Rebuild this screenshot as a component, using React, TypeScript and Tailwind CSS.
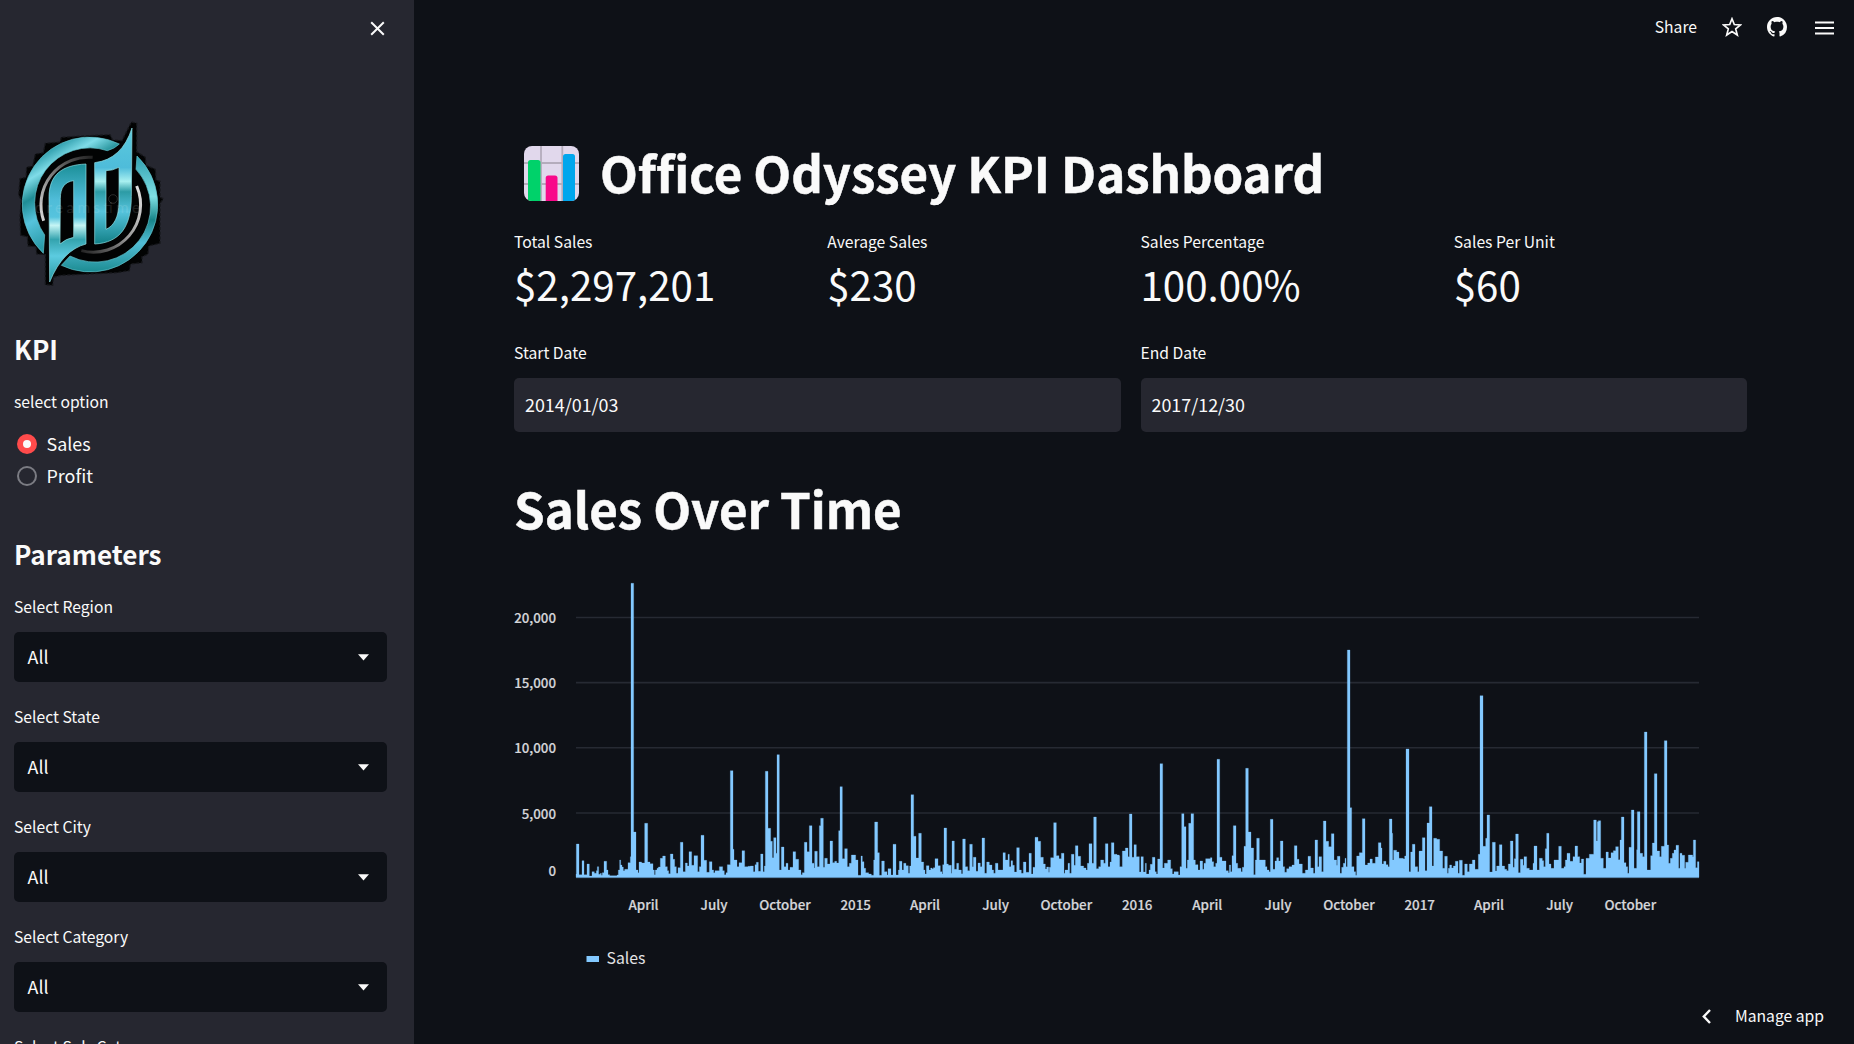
import { BsGithub } from "react-icons/bs";

type Segment = { offset: number; base: number; steps: number[][] };

// Sales profile, one [start, top] pair per step, in thirds of a pixel.
const SEGMENTS: Segment[] = [
  {
    offset: -228,
    base: 952,
    steps: [
      [228, 942], [229, 852], [237, 944], [246, 902], [252, 944], [261, 912], [268, 948], [276, 935], [283, 940], [289, 932],
      [292, 920], [296, 943], [301, 940], [304, 946], [307, 938], [312, 904], [320, 930], [324, 944], [329, 947], [351, 945],
      [355, 930], [359, 900], [362, 915], [366, 921], [370, 932], [374, 928], [384, 908], [391, 890], [393, 70], [401, 816],
      [408, 930], [414, 938], [417, 906], [425, 909], [434, 790], [443, 906], [450, 911], [459, 930], [463, 944], [466, 930],
      [471, 925], [475, 921], [481, 895], [488, 888], [496, 920], [502, 932], [506, 941], [511, 882], [519, 898], [524, 920],
      [529, 940], [534, 923], [541, 847], [549, 935], [556, 909], [562, 918], [567, 875], [575, 916], [582, 887], [593, 935],
      [598, 920], [603, 826], [612, 901], [620, 937], [628, 905], [636, 930], [641, 938], [645, 932], [658, 920], [668, 932],
      [673, 944], [678, 938], [682, 914], [691, 632], [699, 868], [702, 900], [711, 920], [717, 908], [726, 872], [734, 920],
      [744, 919], [751, 918], [760, 935], [765, 914], [769, 907], [775, 934], [782, 882], [789, 935], [793, 918], [796, 634],
      [804, 805], [812, 844], [817, 893], [821, 833], [828, 880], [831, 584], [838, 930], [844, 861], [852, 920], [858, 910],
      [864, 930], [870, 922], [879, 875], [887, 898], [896, 930], [903, 944], [907, 938], [913, 847], [921, 875], [928, 797],
      [936, 910], [942, 924], [944, 874], [952, 920], [958, 797], [962, 775], [970, 922], [974, 895], [982, 912], [990, 843],
      [998, 908], [1004, 904], [1010, 909], [1016, 812], [1020, 680], [1027, 896], [1034, 866], [1042, 920], [1048, 910],
      [1054, 885], [1067, 900], [1074, 946], [1083, 888], [1087, 905], [1092, 925], [1097, 938], [1106, 942], [1114, 946],
      [1121, 900], [1124, 786], [1133, 878], [1138, 946], [1145, 903], [1153, 935], [1161, 945], [1164, 926], [1173, 945],
      [1179, 853], [1188, 945], [1195, 930],
    ],
  },
  {
    offset: 672,
    base: 472,
    steps: [
      [298, 424], [306, 450], [311, 430], [318, 437], [325, 460], [329, 438], [333, 224], [341, 349], [348, 414], [356, 340],
      [364, 426], [371, 450], [375, 462], [379, 437], [387, 450], [392, 444], [396, 446], [400, 443], [405, 416], [414, 437],
      [421, 455], [426, 462], [428, 434], [432, 324], [440, 432], [445, 436], [454, 460], [456, 363], [463, 448], [470, 430],
      [476, 450], [484, 461], [488, 357], [496, 440], [503, 452], [509, 373], [517, 440], [520, 412], [528, 454], [534, 429],
      [541, 440], [546, 354], [554, 460], [560, 426], [568, 435], [576, 450], [581, 460], [586, 430], [594, 450], [602, 450],
      [609, 398], [616, 420], [624, 403], [628, 440], [633, 422], [638, 436], [643, 456], [650, 383], [658, 450], [664, 460],
      [670, 426], [678, 457], [687, 400], [694, 462], [699, 442], [705, 352], [714, 364], [722, 412], [730, 432], [736, 447],
      [740, 441], [746, 457], [748, 442], [752, 413], [761, 308], [769, 407], [777, 416], [784, 400], [792, 460], [795, 450],
      [804, 430], [809, 460], [814, 403], [822, 436], [826, 377], [834, 409], [842, 438], [851, 444], [858, 450], [862, 430],
      [867, 371], [876, 430], [881, 291], [889, 446], [896, 440], [902, 420], [911, 430], [916, 371], [924, 440], [930, 426],
      [934, 368], [942, 403], [951, 405], [958, 408],
    ],
  },
  {
    offset: 1572,
    base: 472,
    steps: [
      [59, 440], [67, 393], [76, 384], [84, 410], [88, 282], [96, 412], [102, 374], [109, 410], [118, 456], [123, 410],
      [130, 456], [136, 430], [139, 462], [147, 450], [151, 433], [157, 412], [165, 455], [169, 462], [173, 417], [180, 131],
      [188, 444], [193, 430], [203, 420], [212, 446], [217, 462], [222, 455], [235, 465], [240, 440], [245, 281], [252, 320],
      [258, 445], [262, 420], [266, 310], [273, 281], [281, 420], [286, 434], [294, 450], [300, 423], [308, 448], [312, 430],
      [317, 416], [331, 413], [336, 425], [341, 440], [347, 430], [351, 118], [359, 412], [366, 423], [378, 452], [385, 458],
      [388, 435], [392, 455], [396, 407], [400, 317], [408, 430], [413, 445], [423, 455], [427, 442], [432, 379], [437, 145],
      [445, 336], [453, 384], [461, 464], [466, 420], [470, 355], [478, 420], [496, 440], [501, 450], [507, 455], [511, 298],
      [519, 448], [525, 423], [530, 413], [536, 423], [541, 363], [549, 440], [554, 457], [560, 446], [567, 440], [576, 435],
      [583, 377], [591, 418], [597, 432], [607, 460], [616, 450], [624, 409], [632, 444], [640, 460], [645, 360], [653, 440],
      [657, 410], [665, 455], [670, 303], [678, 364], [686, 380], [694, 341], [702, 420], [710, 436], [712, 409], [720, 460],
      [725, 442], [730, 430], [735, 415], [738, 440], [742, -210], [750, 263], [755, 440], [762, 455], [767, 466], [770, 408],
      [778, 398], [787, 296], [795, 435], [803, 429], [810, 417], [817, 430], [826, 411], [835, 368], [843, 384], [846, 432],
      [851, 424], [858, 434], [864, 440], [868, 297], [876, 340], [878, 420], [881, 391], [890, 396], [897, 415], [910, 417],
      [914, 408], [918, 87], [927, 455], [932, 396], [937, 373], [945, 440], [953, 455], [957, 394],
    ],
  },
  {
    offset: 2472,
    base: 712,
    steps: [
      [58, 633], [67, 593], [75, 692], [81, 549], [88, 500], [96, 678], [101, 595], [110, 598], [119, 633], [128, 685],
      [134, 649], [142, 700], [145, 685], [149, 675], [155, 684], [160, 678], [166, 664], [174, 700], [178, 661], [187, 706],
      [194, 672], [202, 695], [208, 672], [217, 660], [225, 688], [235, 643], [240, 167], [249, 619], [257, 595], [261, 525],
      [269, 696], [277, 607], [286, 693], [290, 678], [298, 614], [306, 678], [314, 688], [320, 692], [325, 672], [331, 603],
      [339, 682], [343, 656], [347, 582], [355, 698], [361, 658], [369, 676], [372, 650], [380, 685], [388, 690], [399, 670],
      [402, 618], [411, 690], [418, 655], [427, 662], [431, 680], [436, 626], [440, 580], [447, 672], [453, 685], [462, 660],
      [476, 619], [484, 685], [492, 680], [496, 660], [501, 640], [510, 664], [519, 650], [525, 618], [533, 650], [539, 669],
      [544, 657], [551, 703], [558, 655], [568, 643], [581, 540], [589, 603], [592, 545], [595, 542], [602, 655], [610, 685],
      [618, 636], [625, 654], [633, 638], [640, 632], [647, 620], [655, 659], [660, 600], [664, 531], [672, 668], [678, 680],
      [683, 700], [687, 622], [694, 510], [702, 685], [710, 629], [712, 515], [720, 640], [728, 650], [733, 276], [741, 690],
      [752, 647], [757, 609], [763, 401], [771, 633], [779, 650], [784, 619], [793, 302], [801, 615], [806, 670], [811, 655],
      [817, 640], [822, 630], [828, 616], [836, 685], [840, 640], [846, 646], [854, 685], [857, 667], [865, 645], [878, 650],
      [880, 600], [887, 683], [892, 665], [897, 665],
    ],
  },
];

const PLOT_LEFT = 62;
const BASELINE = 302.3;

const areaPath = (() => {
  const points: [number, number][] = [];
  SEGMENTS.forEach((s) =>
    s.steps.forEach(([x, y]) => points.push([PLOT_LEFT + (x + s.offset) / 3, BASELINE - (s.base - y) / 3])),
  );
  let d = `M${PLOT_LEFT} ${BASELINE}`;
  points.forEach(([x, y]) => {
    d += `H${x.toFixed(2)}V${y.toFixed(2)}`;
  });
  return `${d}H1185V${BASELINE}Z`;
})();

const Y_TICKS: [string, number, number][] = [
  ["20,000", 42.5, 48.3],
  ["15,000", 107.6, 113.3],
  ["10,000", 172.7, 178.4],
  ["5,000", 238, 243.8],
  ["0", 0, 301],
];

const X_TICKS: [string, number][] = [
  ["April", 129.5], ["July", 200], ["October", 271], ["2015", 341.7], ["April", 411], ["July", 481.7],
  ["October", 552.3], ["2016", 623.2], ["April", 693.3], ["July", 764], ["October", 835], ["2017", 905.7],
  ["April", 975], ["July", 1045.7], ["October", 1116.3],
];

function SalesChart() {
  return (
    <svg width="1233" height="410" viewBox="0 0 1233 410" className="block">
      {Y_TICKS.map(([label, line, text]) => (
        <g key={label}>
          {line > 0 && <line x1={PLOT_LEFT} x2="1185" y1={line} y2={line} stroke="#262a33" strokeWidth="1.6" />}
          <text x="42" y={text} textAnchor="end" fill="#d5d6da" stroke="#d5d6da" strokeWidth="0.2" fontSize="13.3" fontWeight="500">
            {label}
          </text>
        </g>
      ))}
      <path d={areaPath} fill="#83c9ff" stroke="#83c9ff" strokeOpacity="0.5" strokeWidth="0.5" />
      <line x1={PLOT_LEFT} x2="1185" y1="302.6" y2="302.6" stroke="#5f93bd" strokeWidth="1" />
      {X_TICKS.map(([label, x]) => (
        <text key={x} x={x} y="335" textAnchor="middle" fill="#d5d6da" stroke="#d5d6da" strokeWidth="0.2" fontSize="13.4" fontWeight="500">
          {label}
        </text>
      ))}
      <rect x="72.500" y="381" width="12.500" height="6" fill="#83c9ff" />
      <text x="92.500" y="389" fill="#e3e4e6" fontSize="15.800">
        Sales
      </text>
    </svg>
  );
}

function Logo() {
  return (
    <svg width="200" height="200" viewBox="0 0 600 600" className="block">
      <defs>
        <linearGradient id="ring" x1="0.1" y1="0" x2="0.6" y2="1">
          <stop offset="0" stopColor="#3fb0c2" />
          <stop offset="0.15" stopColor="#2a9aa9" />
          <stop offset="0.28" stopColor="#7fdce8" />
          <stop offset="0.42" stopColor="#1f8d95" />
          <stop offset="0.58" stopColor="#56c3dc" />
          <stop offset="0.8" stopColor="#2a9ba8" />
          <stop offset="1" stopColor="#3cb0bd" />
        </linearGradient>
        <linearGradient id="ringRight" x1="0" y1="0" x2="0" y2="1">
          <stop offset="0" stopColor="#2f9fb0" />
          <stop offset="0.35" stopColor="#7fe0e4" />
          <stop offset="0.55" stopColor="#178489" />
          <stop offset="0.75" stopColor="#52bdd6" />
          <stop offset="1" stopColor="#1c8c92" />
        </linearGradient>
        <linearGradient id="leftLetter" x1="0" y1="0" x2="0" y2="1">
          <stop offset="0" stopColor="#1b8f98" />
          <stop offset="0.3" stopColor="#4fbcd8" />
          <stop offset="0.45" stopColor="#56c4de" />
          <stop offset="0.52" stopColor="#c5f5f5" />
          <stop offset="0.64" stopColor="#34a3ae" />
          <stop offset="0.78" stopColor="#5ccbe0" />
          <stop offset="1" stopColor="#25969f" />
        </linearGradient>
        <linearGradient id="rightLetter" x1="0" y1="0" x2="0" y2="1">
          <stop offset="0" stopColor="#5ccadd" />
          <stop offset="0.34" stopColor="#4ebcda" />
          <stop offset="0.46" stopColor="#a9f0f0" />
          <stop offset="0.55" stopColor="#2c9ba5" />
          <stop offset="0.72" stopColor="#56c4dd" />
          <stop offset="1" stopColor="#128087" />
        </linearGradient>
        <linearGradient id="silverLeft" x1="0" y1="1" x2="1" y2="0">
          <stop offset="0" stopColor="#d8d8d8" />
          <stop offset="0.5" stopColor="#777" />
          <stop offset="1" stopColor="#222" />
        </linearGradient>
        <linearGradient id="silverRight" x1="1" y1="0" x2="0" y2="1">
          <stop offset="0" stopColor="#e4e4e4" />
          <stop offset="0.5" stopColor="#999" />
          <stop offset="1" stopColor="#222" />
        </linearGradient>
      </defs>
      <path
        d="M395 66L410 70L410 155L436 172L438 196L466 208L468 240L480 244L480 292L490 296L480 310L480 430L446 438L444 462L426 470L426 488L392 492L388 512L350 518L182 526L160 532L158 556L136 554L136 464L110 462L108 440L84 438L82 410L62 406L60 350L64 300L56 285L60 236L78 232L80 202L98 198L106 162L130 158L136 130L180 126L184 112L252 108L330 104L338 120L366 122L388 78Z"
        fill="#020303"
        stroke="#17181c"
        strokeWidth="4"
        strokeDasharray="9 5"
      />
      <path
        d="M358 132A202 202 0 0 0 130 460L134 405A166 166 0 0 1 322 152Q344 146 358 132Z"
        fill="url(#ring)"
        stroke="#62c3cc"
        strokeWidth="2"
      />
      <path
        d="M411 168A202 202 0 0 1 184 496L210 468A166 166 0 0 0 408 208Z"
        fill="url(#ringRight)"
        stroke="#62c3cc"
        strokeWidth="2"
      />
      <path d="M131 362A143 143 0 0 1 278 172" fill="none" stroke="url(#silverLeft)" strokeWidth="9" />
      <path d="M410 258A142 142 0 0 1 244 452" fill="none" stroke="url(#silverRight)" strokeWidth="9" />
      <path
        fillRule="evenodd"
        d="M258 192L258 432Q188 450 149 546L147 290C148 225 185 195 258 192ZM221 242C195 245 181 262 181 296L180 432Q198 416 221 412Z"
        fill="url(#leftLetter)"
        stroke="#8fdfe4"
        strokeWidth="2"
      />
      <path
        fillRule="evenodd"
        d="M396 84L394 290C394 380 360 428 284 432L284 188Q366 178 396 84ZM318 212L318 388C342 378 357 350 357 306L357 202Q338 212 318 212Z"
        fill="url(#rightLetter)"
        stroke="#8fdfe4"
        strokeWidth="2"
      />
      <text x="104" y="340" fontSize="46" fill="#ffffff" opacity="0.1" textLength="316" fontFamily="Lato, sans-serif">
        dreamstime
      </text>
      <circle cx="339" cy="297" r="13" fill="none" stroke="#ffffff" strokeOpacity="0.15" strokeWidth="3" />
    </svg>
  );
}

function BarChartEmoji() {
  return (
    <svg width="55" height="55" viewBox="0 0 55 55" className="mt-[7px] ml-[10px] block shrink-0">
      <rect width="55" height="55" rx="8" fill="#e1d8ec" />
      <path d="M17 0V55M38.3 0V55M0 17H55M0 38H55" stroke="#b4acbc" strokeWidth="1.8" />
      <path d="M4 55V16.500a2.500 2.500 0 0 1 2.500-2.500H14a2.500 2.500 0 0 1 2.500 2.500V55H8Q6 55 4 54Z" fill="#00d26a" />
      <path d="M21.700 55V32a2.500 2.500 0 0 1 2.500-2.500H31a2.500 2.500 0 0 1 2.500 2.500V55Z" fill="#f8098a" />
      <path d="M39 55V10.500A2.500 2.500 0 0 1 41.500 8H48.500a2.500 2.500 0 0 1 2.500 2.500V54Q49 55 47 55Z" fill="#00a6ed" />
    </svg>
  );
}

function Select({ label }: { label: string }) {
  return (
    <div className="h-[110px]">
      <div className="h-[39px] text-[15.7px] leading-7">{label}</div>
      <div className="flex h-[50px] w-[373px] items-center justify-between rounded-[5px] bg-[#0e1117] pr-[18px] pl-[13.5px] text-[17.9px]">
        <span className="-mt-[2px] leading-[48px]">All</span>
        <svg width="11" height="7" viewBox="0 0 11 7">
          <path d="M0 0.300H11L5.500 6.500Z" fill="#fafafa" />
        </svg>
      </div>
    </div>
  );
}

function Sidebar() {
  return (
    <aside className="relative h-full w-[414px] shrink-0 overflow-hidden bg-[#262730]">
      <svg width="15" height="15" viewBox="0 0 15 15" className="absolute top-[21px] left-[370px]">
        <path d="M1.200 1.200L13.800 13.800M13.800 1.200L1.200 13.800" stroke="#fafafa" strokeWidth="2" />
      </svg>
      <div className="pt-[100px]">
        <Logo />
      </div>
      <div className="pl-[14px]">
        <h2 className="mt-[31px] text-[26.1px] leading-[36px] font-bold">KPI</h2>
        <div className="mt-[21px] text-[15.7px] leading-7">select option</div>
        <div className="mt-[12px] flex h-8 items-center gap-[9.5px] pl-[3px]">
          <span className="flex size-5 items-center justify-center rounded-full bg-[#ff4b4b]">
            <span className="size-[7.500px] rounded-full bg-[#fafafa]" />
          </span>
          <span className="-mt-[2px] text-[17.9px] leading-[30px]">Sales</span>
        </div>
        <div className="flex h-8 items-center gap-[9.5px] pl-[3px]">
          <span className="size-5 rounded-full border-2 border-[#7b7c83]" />
          <span className="-mt-[2px] text-[17.9px] leading-[30px]">Profit</span>
        </div>
        <h2 className="mt-[44px] mb-[21px] text-[26.1px] leading-[36px] font-bold">Parameters</h2>
        {["Select Region", "Select State", "Select City", "Select Category", "Select Sub-Category"].map((l) => (
          <Select key={l} label={l} />
        ))}
      </div>
    </aside>
  );
}

const METRICS = [
  ["Total Sales", "$2,297,201"],
  ["Average Sales", "$230"],
  ["Sales Percentage", "100.00%"],
  ["Sales Per Unit", "$60"],
];

export default function App() {
  return (
    <div className="relative flex h-[1044px] w-[1854px] overflow-hidden bg-[#0e1117] font-['Noto_Sans_CJK_SC','Noto_Sans_CJK_JP',sans-serif] text-[#fafafa]">
      <Sidebar />
      <main className="min-w-0 flex-1">
        <header className="flex h-[55px] items-center justify-end pr-5">
          <span className="-mt-px text-[15.7px] leading-7">Share</span>
          <svg width="20" height="20" viewBox="0 0 20 20" className="-mt-px ml-[25px]">
            <path
              d="M10 1.800L12.300 7.500L18.500 7.900L13.700 11.900L15.300 18L10 14.600L4.700 18L6.300 11.900L1.500 7.900L7.700 7.500Z"
              fill="none"
              stroke="#fafafa"
              strokeWidth="1.700"
            />
          </svg>
          <BsGithub className="-mt-px ml-[25px] size-5" />
          <svg width="19" height="14" viewBox="0 0 19 14" className="ml-7">
            <path d="M0 1.500H19M0 7H19M0 12.500H19" stroke="#fafafa" strokeWidth="1.900" />
          </svg>
        </header>
        <div className="px-[100px] pt-[84px] pr-[107px]">
          <h1 className="flex h-[66px] text-[49.2px] leading-[66px] font-bold tracking-[-0.04px] [-webkit-text-stroke:0.5px_#fafafa]">
            <BarChartEmoji />
            <span className="ml-[21px] whitespace-nowrap">Office Odyssey KPI Dashboard</span>
          </h1>
          <div className="mt-[23px] grid grid-cols-4 gap-5">
            {METRICS.map(([label, value]) => (
              <div key={label}>
                <div className="text-[15.7px] leading-7">{label}</div>
                <div className="mt-[2px] text-[40.3px] leading-[52px]">{value}</div>
              </div>
            ))}
          </div>
          <div className="mt-[29px] grid grid-cols-2 gap-5">
            {[
              ["Start Date", "2014/01/03"],
              ["End Date", "2017/12/30"],
            ].map(([label, value]) => (
              <div key={label}>
                <div className="h-[39px] text-[15.7px] leading-7">{label}</div>
                <div className="h-[54px] rounded-[5px] bg-[#262730] pl-[11px] text-[17.9px] leading-[52px]">{value}</div>
              </div>
            ))}
          </div>
          <h1 className="mt-[43px] text-[49.2px] leading-[66px] font-bold tracking-[-0.03px] [-webkit-text-stroke:0.5px_#fafafa]">
            Sales Over Time
          </h1>
          <div className="mt-[34px]">
            <SalesChart />
          </div>
        </div>
      </main>
      <div className="absolute right-[30px] bottom-[14px] flex items-center gap-[24px]">
        <svg width="9" height="15" viewBox="0 0 9 15" className="-mt-px">
          <path d="M8 1L1.800 7.500L8 14" fill="none" stroke="#fafafa" strokeWidth="2.400" />
        </svg>
        <span className="-mt-[2px] text-[15.7px] leading-7">Manage app</span>
      </div>
    </div>
  );
}
